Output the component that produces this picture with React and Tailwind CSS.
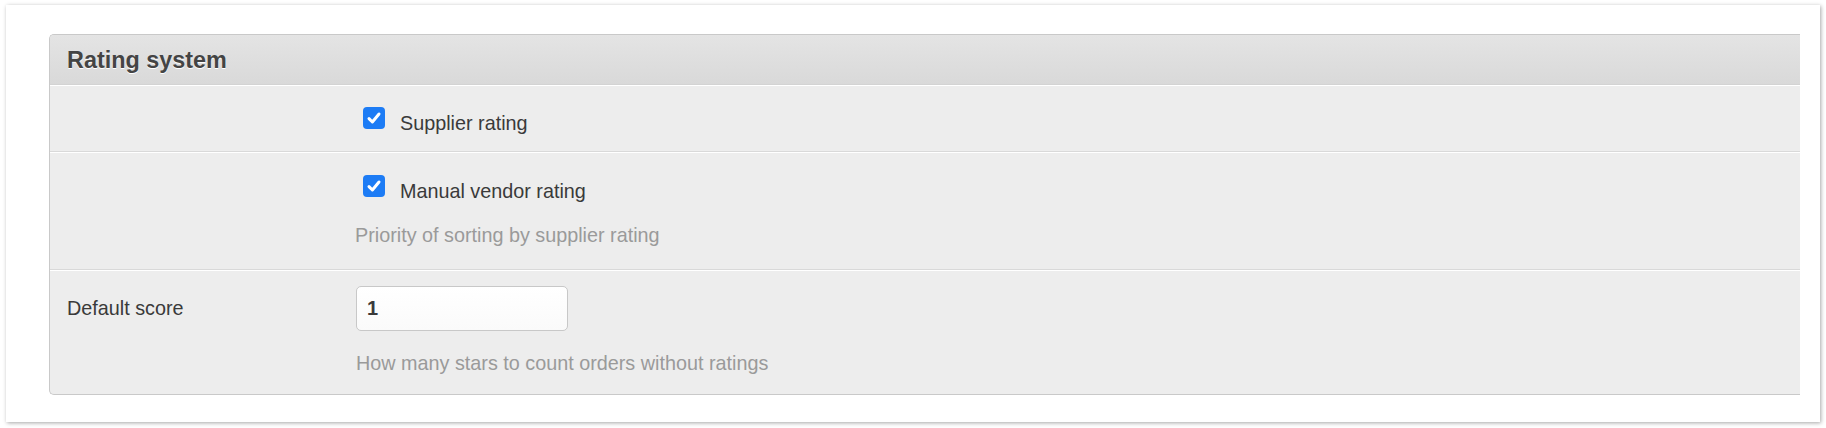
import React from 'react';

const Checkbox = () => (
  <span className="flex h-[22px] w-[22px] shrink-0 items-center justify-center rounded-[4px] bg-[#1d7cf5]">
    <svg width="16" height="16" viewBox="0 0 16 16" fill="none">
      <path d="M3 8.6 L6.4 12 L13 4" stroke="white" strokeWidth="3" strokeLinecap="round" strokeLinejoin="round" />
    </svg>
  </span>
);

const App = () => {
  return (
    <div className="min-h-screen bg-white pl-[6px] pt-[5px] font-['Liberation_Sans',Arial,sans-serif]">
      <div className="h-[417px] w-[1814px] bg-white pl-[43px] pt-[29px] shadow-[1px_1px_4px_rgba(0,0,0,0.35)]">
        {/* Panel */}
        <div className="w-[1751px] overflow-hidden rounded-l-[5px] border-y border-l border-[#c9c9c9] bg-[#ededed]">
          {/* Header */}
          <div className="h-[50px] border-b border-[#d3d3d3] bg-gradient-to-b from-[#e4e4e4] to-[#d9d9d9] pl-[17px] pt-[12px]">
            <h2 className="text-[23.4px] font-bold leading-[26px] text-[#444] [text-shadow:0_1px_0_#fff]">
              Rating system
            </h2>
          </div>

          {/* Supplier rating */}
          <div className="flex border-t border-b border-t-white border-b-[#d9d9d9] pb-[17px] pt-[21px]">
            <div className="w-[305px] shrink-0" />
            <div className="flex items-start pl-[8px]">
              <Checkbox />
              <span className="ml-[15px] mt-[5px] text-[19.8px] leading-[22px] text-[#3a3a3a]">Supplier rating</span>
            </div>
          </div>

          {/* Manual vendor rating */}
          <div className="flex border-t border-b border-t-white border-b-[#d9d9d9] pb-[23px] pt-[22px]">
            <div className="w-[305px] shrink-0" />
            <div className="flex flex-col">
              <div className="flex items-start pl-[8px]">
                <Checkbox />
                <span className="ml-[15px] mt-[5px] text-[19.8px] leading-[22px] text-[#3a3a3a]">Manual vendor rating</span>
              </div>
              <p className="mt-[22px] text-[19.8px] leading-[22px] text-[#9a9a9a]">Priority of sorting by supplier rating</p>
            </div>
          </div>

          {/* Default score */}
          <div className="flex border-t border-t-white pb-[20px] pt-[15px]">
            <div className="w-[305px] shrink-0 pl-[17px] pt-[11px] text-[19.8px] leading-[22px] text-[#3a3a3a]">
              Default score
            </div>
            <div className="flex flex-col pl-[1px]">
              <input
                type="text"
                defaultValue="1"
                className="h-[45px] w-[212px] rounded-[5px] border border-[#c8c8c8] bg-gradient-to-b from-white to-[#fafafa] px-[10px] text-[20px] font-bold text-[#3a3a3a] outline-none"
              />
              <p className="mt-[21px] text-[19.8px] leading-[22px] text-[#9a9a9a]">How many stars to count orders without ratings</p>
            </div>
          </div>
        </div>
      </div>
    </div>
  );
};

export default App;
